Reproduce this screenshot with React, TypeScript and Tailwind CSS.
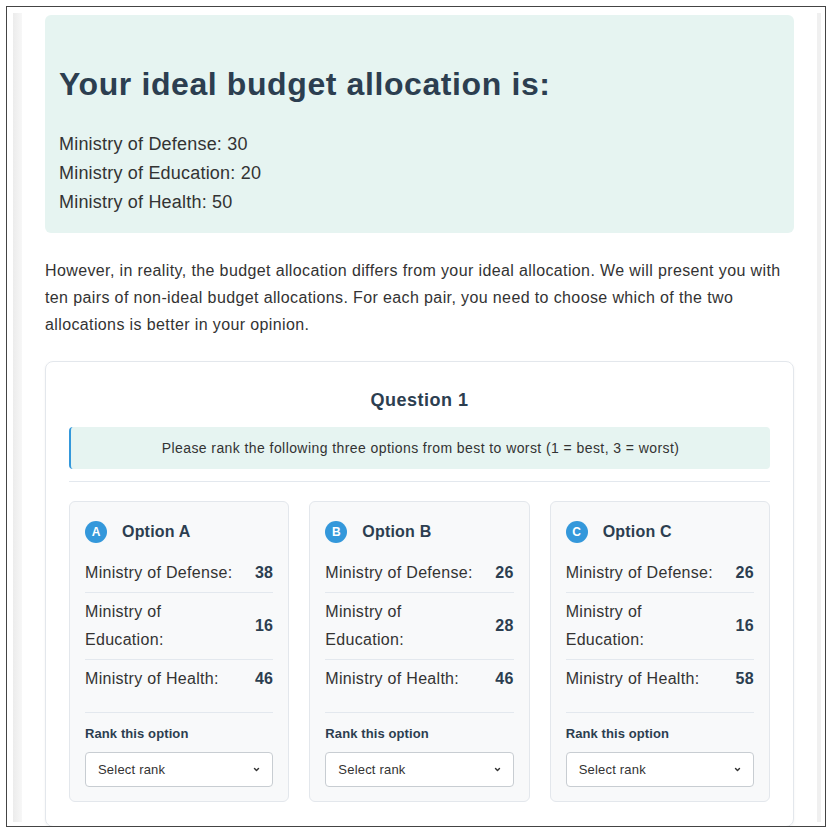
const ideal = [
  { name: "Ministry of Defense", value: 30 },
  { name: "Ministry of Education", value: 20 },
  { name: "Ministry of Health", value: 50 },
];

const options = [
  { key: "A", values: [38, 16, 46] },
  { key: "B", values: [26, 28, 46] },
  { key: "C", values: [26, 16, 58] },
];

const ChevronDown = () => (
  <svg width="9" height="9" viewBox="0 0 10 10" fill="none" stroke="#333" strokeWidth="1.6" strokeLinecap="round" strokeLinejoin="round">
    <path d="M2.8 4l2.2 2.2L7.2 4" />
  </svg>
);

const OptionCard = ({ opt }: { opt: (typeof options)[number] }) => (
  <div className="bg-[#f8f9fa] border border-[#e3e7ec] rounded-[6px] px-[15px] pt-[18px] pb-[14px]">
    <div className="flex items-center h-6 gap-[15px]">
      <span className="w-[22px] h-[22px] rounded-full bg-[#3498db] text-white text-[12px] font-bold flex items-center justify-center">
        {opt.key}
      </span>
      <span className="text-[16px] font-bold text-[#2c3e50] tracking-[0.2px]">Option {opt.key}</span>
    </div>
    <div className="mt-[10px]">
      {ideal.map((m, i) => (
        <div
          key={m.name}
          className={`flex items-center justify-between gap-[16px] py-[5px] text-[16px] leading-[28px] tracking-[0.3px] ${
            i < ideal.length - 1 ? "border-b border-[#e3e8ee]" : ""
          }`}
        >
          <div className="text-[#333]">{m.name}:</div>
          <div className="font-bold text-[#2c3e50] shrink-0">{opt.values[i]}</div>
        </div>
      ))}
    </div>
    <div className="mt-[14px] border-t border-[#e3e8ee] pt-[13px]">
      <div className="text-[13px] font-bold text-[#2c3e50] leading-[16px] tracking-[0.1px]">Rank this option</div>
      <div className="mt-[10px] h-[35px] bg-white border border-[#c8cdd2] rounded-[4px] flex items-center justify-between pl-[12px] pr-[11px]">
        <span className="text-[13px] text-[#333] tracking-[0.2px]">Select rank</span>
        <ChevronDown />
      </div>
    </div>
  </div>
);

export default function App() {
  return (
    <div className="w-[834px] h-[835px] bg-white font-['Liberation_Sans',Arial,sans-serif] pt-[6px] pl-[6px]">
      <div className="w-[820px] h-[821px] border border-[#444] overflow-hidden flex pl-[6px] pr-[4px] pt-[6px]">
        <div className="w-[9px] h-[809px] bg-gradient-to-r from-[#ececec] to-[#f7f7f7] shrink-0" />
        <div className="w-[795px] shrink-0 px-[23px] pt-[2px]">
          <div className="bg-[#e6f4f1] rounded-[6px] px-[14px] pt-[51px] pb-[16px]">
            <h2 className="text-[32px] font-bold text-[#2c3e50] leading-[37px] mb-[27px] tracking-[0.6px]">
              Your ideal budget allocation is:
            </h2>
            {ideal.map((m) => (
              <div key={m.name} className="text-[18px] leading-[29px] text-[#333] tracking-[0.2px]">
                {m.name}: {m.value}
              </div>
            ))}
          </div>

          <p className="mt-[24px] text-[16px] leading-[27px] text-[#333] tracking-[0.38px]">
            However, in reality, the budget allocation differs from your ideal allocation. We will present you with
            ten pairs of non-ideal budget allocations. For each pair, you need to choose which of the two
            allocations is better in your opinion.
          </p>

          <div className="mt-[23px] border border-[#e3e7ec] rounded-[8px] shadow-[0_1px_3px_rgba(0,0,0,0.05)] px-[23px] pt-[27px] pb-6">
            <h3 className="text-center text-[18px] font-bold text-[#2c3e50] leading-[22px] tracking-[0.5px]">Question 1</h3>
            <div className="mt-4 bg-[#e6f4f1] border-l-2 border-[#3498db] rounded-[4px] py-3 text-center text-[14px] leading-[18px] text-[#333] tracking-[0.42px]">
              Please rank the following three options from best to worst (1 = best, 3 = worst)
            </div>
            <div className="mt-3 border-t border-[#e3e8ee]" />
            <div className="mt-[19px] grid grid-cols-3 gap-5">
              {options.map((o) => (
                <OptionCard key={o.key} opt={o} />
              ))}
            </div>
          </div>
        </div>
        <div className="w-[4px] h-[809px] bg-[#f0f0f0] shrink-0" />
      </div>
    </div>
  );
}
